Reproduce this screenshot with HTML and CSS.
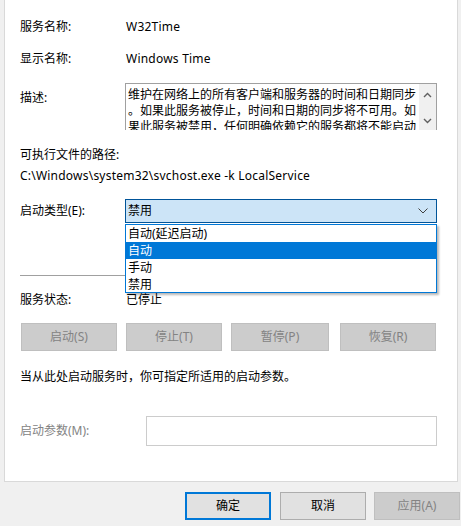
FILE: index.html
```html
<!DOCTYPE html>
<html lang="zh-CN">
<head>
<meta charset="utf-8">
<title>Windows Time 的属性</title>
<link rel="stylesheet" href="styles.css">
</head>
<body>
<div class="dialog">
  <div class="panel">
    <div class="row r1">
      <span class="label">服务名称:</span>
      <span class="value latin">W32Time</span>
    </div>
    <div class="row r2">
      <span class="label">显示名称:</span>
      <span class="value latin">Windows Time</span>
    </div>
    <div class="row r3">
      <span class="label desc-label">描述:</span>
      <div class="desc">
        <div class="desc-text">
          <div>维护在网络上的所有客户端和服务器的时间和日期同步</div>
          <div>。如果此服务被停止，时间和日期的同步将不可用。如</div>
          <div>果此服务被禁用，任何明确依赖它的服务都将不能启动</div>
        </div>
        <div class="scrollbar">
          <svg class="arrow" width="9" height="6" viewBox="0 0 9 6"><path d="M1 5 L4.5 1.5 L8 5" fill="none" stroke="#606060" stroke-width="1.4"/></svg>
          <svg class="arrow" width="9" height="6" viewBox="0 0 9 6"><path d="M1 1 L4.5 4.5 L8 1" fill="none" stroke="#606060" stroke-width="1.4"/></svg>
        </div>
      </div>
    </div>
    <div class="path-label">可执行文件的路径:</div>
    <div class="path latin">C:\Windows\system32\svchost.exe -k LocalService</div>
    <div class="row r-combo">
      <span class="label">启动类型(E):</span>
      <div class="combo-wrap">
        <div class="combo">
          <span>禁用</span>
          <svg width="10" height="6" viewBox="0 0 10 6"><path d="M0.5 0.5 L5 5 L9.5 0.5" fill="none" stroke="#404040" stroke-width="1"/></svg>
        </div>
        <ul class="dropdown">
          <li>自动(延迟启动)</li>
          <li class="selected">自动</li>
          <li>手动</li>
          <li>禁用</li>
        </ul>
      </div>
    </div>
    <div class="separator"></div>
    <div class="row r-status">
      <span class="label">服务状态:</span>
      <span class="value">已停止</span>
    </div>
    <div class="buttons">
      <button class="btn disabled">启动(S)</button>
      <button class="btn disabled">停止(T)</button>
      <button class="btn disabled wide">暂停(P)</button>
      <button class="btn disabled">恢复(R)</button>
    </div>
    <div class="hint">当从此处启动服务时，你可指定所适用的启动参数。</div>
    <div class="row r-param">
      <span class="label param-label">启动参数(M):</span>
      <div class="param-input"></div>
    </div>
  </div>
  <div class="footer">
    <button class="fbtn default">确定</button>
    <button class="fbtn">取消</button>
    <button class="fbtn off">应用(A)</button>
  </div>
</div>
</body>
</html>
```

FILE: styles.css
```css
html, body {
  margin: 0;
  padding: 0;
}
body {
  width: 461px;
  height: 526px;
  background: #f0f0f0;
  font-family: "Segoe UI", "Noto Sans", "Noto Sans CJK SC", sans-serif;
  font-size: 12px;
  line-height: 16px;
  color: #000;
  overflow: hidden;
}
.dialog {
  width: 461px;
  height: 526px;
}
.panel {
  margin-left: 4px;
  width: 437px;
  height: 462px;
  background: #fff;
  border: 1px solid #d9d9d9;
  border-top: none;
  padding-left: 15px;
  padding-top: 19px;
  box-sizing: content-box;
  position: relative;
}
.row {
  display: flex;
  align-items: flex-start;
}
.label {
  width: 105px;
  flex: none;
}
.value {
  padding-left: 1px;
}
.latin {
  letter-spacing: 0.22px;
}
.r2 { margin-top: 16px; }
.r3 { margin-top: 16px; }
.desc-label { margin-top: 7px; }
.desc {
  width: 312px;
  height: 47px;
  box-sizing: border-box;
  border: 1px solid #a0a0a0;
  border-bottom: none;
  display: flex;
  overflow: hidden;
}
.desc-text {
  flex: 1;
  padding: 3px 0 0 2px;
  white-space: nowrap;
  overflow: hidden;
}
.scrollbar {
  width: 17px;
  flex: none;
  background: #f0f0f0;
  display: flex;
  flex-direction: column;
  align-items: center;
  justify-content: space-between;
  padding: 8px 0 6px;
  box-sizing: border-box;
}
.arrow { display: block; }
.path-label { margin-top: 17px; }
.path { margin-top: 5px; }
.r-combo {
  margin-top: 15px;
  align-items: center;
}
.combo-wrap {
  position: relative;
}
.combo {
  width: 312px;
  height: 24px;
  box-sizing: border-box;
  background: #cce4f7;
  border: 1px solid #005499;
  display: flex;
  align-items: center;
  justify-content: space-between;
  padding: 0 8px 0 2px;
}
.dropdown {
  position: absolute;
  left: 0;
  top: 25px;
  width: 312px;
  height: 69px;
  box-sizing: border-box;
  margin: 0;
  padding: 0;
  list-style: none;
  background: #fff;
  border: 1px solid #0078d7;
  box-shadow: 2px 2px 2px rgba(0, 0, 0, 0.28);
  z-index: 5;
}
.dropdown li {
  height: 17px;
  line-height: 17px;
  padding-left: 2px;
}
.dropdown li.selected {
  background: #0078d7;
  color: #fff;
}
.separator {
  margin-top: 52px;
  width: 416px;
  height: 1px;
  background: #a0a0a0;
}
.r-status { margin-top: 16px; }
.buttons {
  margin-top: 15px;
  display: flex;
  gap: 9px;
  padding-left: 1px;
}
.btn {
  width: 96px;
  height: 28px;
  font: inherit;
  border: 1px solid #bfbfbf;
  background: #cccccc;
  color: #838383;
  padding: 0;
  margin: 0;
}
.btn.wide {
  width: 98px;
  margin-right: 2px;
}
.hint { margin-top: 18px; }
.r-param {
  margin-top: 31px;
  align-items: center;
}
.param-label {
  width: 126px;
  color: #838383;
}
.param-input {
  width: 291px;
  height: 30px;
  box-sizing: border-box;
  border: 1px solid #cccccc;
  background: #fff;
}
.footer {
  margin-top: 10px;
  display: flex;
  justify-content: flex-end;
  padding-right: 1px;
}
.fbtn {
  width: 86px;
  height: 28px;
  font: inherit;
  padding: 0;
  margin: 0 0 0 8px;
  background: #e1e1e1;
  border: 1px solid #adadad;
  color: #000;
}
.fbtn.default {
  border: 2px solid #0078d7;
  margin-right: 1px;
}
.fbtn.off {
  background: #cccccc;
  border-color: #bfbfbf;
  color: #838383;
}
```
